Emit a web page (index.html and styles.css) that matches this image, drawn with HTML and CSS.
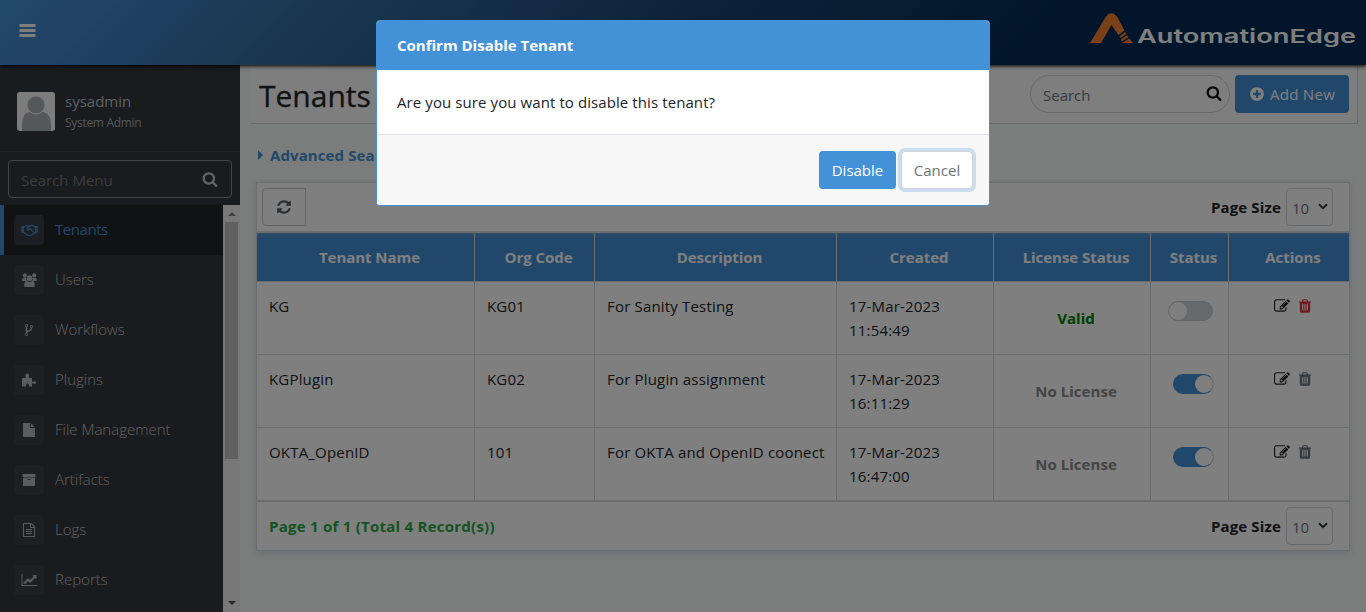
FILE: index.html
```html
<!DOCTYPE html>
<html lang="en">
<head>
<meta charset="utf-8">
<title>Tenants</title>
<link rel="stylesheet" href="styles.css">
</head>
<body>
<svg class="defs" width="0" height="0">
  <symbol id="search" viewBox="0 0 1792 1792"><path d="M1216 832q0-185-131.500-316.500t-316.500-131.500-316.500 131.500-131.500 316.500 131.500 316.500 316.500 131.500 316.500-131.500 131.500-316.500zm512 832q0 52-38 90t-90 38q-54 0-90-38l-343-342q-179 124-399 124-143 0-273.500-55.500t-225-150-150-225-55.500-273.500 55.500-273.500 150-225 225-150 273.500-55.500 273.500 55.500 225 150 150 225 55.500 273.500q0 220-124 399l343 343q37 37 37 90z"/></symbol>
  <symbol id="refresh" viewBox="0 0 1792 1792"><path d="M1639 1056q0 5-1 7-64 268-268 434.500t-478 166.500q-146 0-282.500-55t-243.500-157l-129 129q-19 19-45 19t-45-19-19-45v-448q0-26 19-45t45-19h448q26 0 45 19t19 45-19 45l-137 137q71 66 161 102t187 36q134 0 250-65t186-179q11-17 53-117 8-23 30-23h192q13 0 22.500 9.500t9.500 22.500zm25-800v448q0 26-19 45t-45 19h-448q-26 0-45-19t-19-45 19-45l138-138q-148-137-349-137-134 0-250 65t-186 179q-11 17-53 117-8 23-30 23h-199q-13 0-22.500-9.500t-9.500-22.500v-7q65-268 270-434.500t480-166.500q146 0 284 55.500t245 156.500l130-129q19-19 45-19t45 19 19 45z"/></symbol>
  <symbol id="plus" viewBox="0 0 1792 1792"><path d="M1344 960v-128q0-26-19-45t-45-19h-256v-256q0-26-19-45t-45-19h-128q-26 0-45 19t-19 45v256h-256q-26 0-45 19t-19 45v128q0 26 19 45t45 19h256v256q0 26 19 45t45 19h128q26 0 45-19t19-45v-256h256q26 0 45-19t19-45zm320-64q0 209-103 385.500t-279.500 279.500-385.500 103-385.500-103-279.500-279.500-103-385.500 103-385.500 279.500-279.500 385.500-103 385.500 103 279.500 279.500 103 385.500z"/></symbol>
  <symbol id="trash" viewBox="0 0 1792 1792"><path d="M704 1376v-704q0-14-9-23t-23-9h-64q-14 0-23 9t-9 23v704q0 14 9 23t23 9h64q14 0 23-9t9-23zm256 0v-704q0-14-9-23t-23-9h-64q-14 0-23 9t-9 23v704q0 14 9 23t23 9h64q14 0 23-9t9-23zm256 0v-704q0-14-9-23t-23-9h-64q-14 0-23 9t-9 23v704q0 14 9 23t23 9h64q14 0 23-9t9-23zm-544-992h448l-48-117q-7-9-17-11h-317q-10 2-17 11zm928 32v64q0 14-9 23t-23 9h-96v948q0 83-47 143.500t-113 60.500h-832q-66 0-113-58.500t-47-141.500v-952h-96q-14 0-23-9t-9-23v-64q0-14 9-23t23-9h309l70-167q15-37 54-63t79-26h320q40 0 79 26t54 63l70 167h309q14 0 23 9t9 23z"/></symbol>
  <symbol id="edit" viewBox="0 0 1792 1792"><path d="M888 1184l116-116-152-152-116 116v56h96v96h56zm440-720q-16-16-33 1l-350 350q-17 17-1 33t33-1l350-350q17-17 1-33zm80 594v190q0 119-84.500 203.500t-203.500 84.500h-832q-119 0-203.500-84.500t-84.500-203.500v-832q0-119 84.500-203.500t203.500-84.500h832q63 0 117 25 15 7 18 23 3 17-9 29l-49 49q-14 14-32 8-23-6-45-6h-832q-66 0-113 47t-47 113v832q0 66 47 113t113 47h832q66 0 113-47t47-113v-126q0-13 9-22l64-64q15-15 35-7t20 29zm-96-738l288 288-672 672h-288v-288zm444 132l-92 92-288-288 92-92q28-28 68-28t68 28l152 152q28 28 28 68t-28 68z"/></symbol>
</svg>

<header class="topbar">
  <svg class="burger" viewBox="0 0 17 13"><path d="M.5 0h16v3H.5zM.5 5h16v3H.5zM.5 10h16v3H.5z"/></svg>
  <svg class="logo" viewBox="0 0 270 40">
    <path class="mark" d="M1 31 17 4.500Q22-2 28 4.500L35.500 18.500 29.500 23 22.500 13 12 31ZM30.500 24.200 36.300 20 37.500 22 31.300 26ZM32 27.300 38.300 23.300 39.500 25.200 32.800 29.500ZM33 31 40.300 26.500 44 31Z"/>
    <text x="48" y="30.500" textLength="219" lengthAdjust="spacingAndGlyphs">AutomationEdge</text>
  </svg>
</header>

<div class="layout">
  <aside class="sidebar">
    <div class="user">
      <svg class="avatar" viewBox="0 0 38 39"><rect width="38" height="39" rx="3"/><path d="M5 39v-5q0-14 8-14 6 4 12 0 9 0 9 14v5z"/><circle cx="19" cy="13" r="9"/></svg>
      <div><div class="name">sysadmin</div><div class="role">System Admin</div></div>
    </div>
    <div class="menu-search"><span>Search Menu</span><svg class="ic"><use href="#search"/></svg></div>
    <div class="menu-wrap">
      <nav class="menu">
        <div class="item active"><i><svg class="wide" viewBox="0 0 18 13"><path class="line" d="M1 3h1.500v6H1zM15.500 3H17v6h-1.500zM2.500 3.200 5.500 2l3 .5L11 1.500l4.500 1.700M2.500 9l4.500 3q2 .8 4 0l4.500-3M8.500 2.500 6.500 5q.5 1.800 2.300.8L10 5l3.500 4"/></svg></i><span>Tenants</span></div>
        <div class="item"><i><svg class="wide" viewBox="0 0 18 15"><circle cx="4" cy="2.500" r="2.200"/><circle cx="14" cy="2.500" r="2.200"/><path d="M1 8q0-3 2-3h2q0 2 1.500 3.500H1zM17 8q0-3-2-3h-2q0 2-1.500 3.500H17zM3.500 15v-3q0-3.500 2.500-3.500 3 2 6 0 2.500 0 2.500 3.500v3z"/><circle cx="9" cy="5.500" r="3.200"/></svg></i><span>Users</span></div>
        <div class="item"><i><svg viewBox="0 0 1792 1792"><path d="M672 1472q0-40-28-68t-68-28-68 28-28 68 28 68 68 28 68-28 28-68zm0-1152q0-40-28-68t-68-28-68 28-28 68 28 68 68 28 68-28 28-68zm640 128q0-40-28-68t-68-28-68 28-28 68 28 68 68 28 68-28 28-68zm96 0q0 52-26 96.500t-70 69.500q-2 287-226 414-67 38-203 81-128 40-169.500 71t-41.500 100v26q44 25 70 69.500t26 96.500q0 80-56 136t-136 56-136-56-56-136q0-52 26-96.500t70-69.500v-820q-44-25-70-69.500t-26-96.500q0-80 56-136t136-56 136 56 56 136q0 52-26 96.500t-70 69.500v497q54-26 154-57 55-17 87.500-29.500t70.500-31 59-39.500 40.500-51 28-69.500 8.500-91.500q-44-25-70-69.500t-26-96.500q0-80 56-136t136-56 136 56 56 136z"/></svg></i><span>Workflows</span></div>
        <div class="item"><i><svg viewBox="0 0 14 14"><path d="M0 5h4Q3 3.500 3.500 2q.3-1.500 1.700-1.500T7 2Q7.500 3.500 6.500 5H10v3.500q1 .6 2-.1t1.700.3q.5 1.200-.2 1.900-.8.600-2-.1-.8-.3-1.500.1v2.900H7q0-3-1.500-3T4 13.500H0z"/></svg></i><span>Plugins</span></div>
        <div class="item"><i><svg viewBox="0 0 1792 1792"><path d="M1152 512v-472q22 14 36 28l408 408q14 14 28 36h-472zm-128 32q0 40 28 68t68 28h544v1056q0 40-28 68t-68 28h-1344q-40 0-68-28t-28-68v-1600q0-40 28-68t68-28h800v544z"/></svg></i><span>File Management</span></div>
        <div class="item"><i><svg viewBox="0 0 1792 1792"><path d="M1088 832q0-26-19-45t-45-19h-256q-26 0-45 19t-19 45 19 45 45 19h256q26 0 45-19t19-45zm576-192v960q0 26-19 45t-45 19h-1408q-26 0-45-19t-19-45v-960q0-26 19-45t45-19h1408q26 0 45 19t19 45zm64-448v256q0 26-19 45t-45 19h-1536q-26 0-45-19t-19-45v-256q0-26 19-45t45-19h1536q26 0 45 19t19 45z"/></svg></i><span>Artifacts</span></div>
        <div class="item"><i><svg viewBox="0 0 1792 1792"><path d="M1596 380q28 28 48 76t20 88v1152q0 40-28 68t-68 28h-1344q-40 0-68-28t-28-68v-1600q0-40 28-68t68-28h896q40 0 88 20t76 48zm-444-244v376h376q-10-29-22-41l-313-313q-12-12-41-22zm384 1528v-1024h-416q-40 0-68-28t-28-68v-416h-768v1536h1280zm-1024-864q0-14 9-23t23-9h704q14 0 23 9t9 23v64q0 14-9 23t-23 9h-704q-14 0-23-9t-9-23v-64zm736 224q14 0 23 9t9 23v64q0 14-9 23t-23 9h-704q-14 0-23-9t-9-23v-64q0-14 9-23t23-9h704zm0 256q14 0 23 9t9 23v64q0 14-9 23t-23 9h-704q-14 0-23-9t-9-23v-64q0-14 9-23t23-9h704z"/></svg></i><span>Logs</span></div>
        <div class="item"><i><svg class="wide" viewBox="0 0 2048 1792"><path d="M2048 1536v128h-2048v-1536h128v1408h1920zm-128-1248v435q0 21-19.500 29.500t-35.500-7.500l-121-121-633 633q-10 10-23 10t-23-10l-233-233-416 416-192-192 585-585q10-10 23-10t23 10l233 233 464-464-121-121q-16-16-7.500-35.500t29.500-19.500h435q14 0 23 9t9 23z"/></svg></i><span>Reports</span></div>
      </nav>
      <div class="scrollbar"><b class="up"></b><div class="thumb"></div><b class="down"></b></div>
    </div>
  </aside>

  <main class="content">
    <div class="titlebar">
      <h1>Tenants</h1>
      <div class="find"><span>Search</span><svg class="ic"><use href="#search"/></svg></div>
      <button class="add"><svg class="ic"><use href="#plus"/></svg><span>Add New</span></button>
    </div>
    <div class="advanced"><b class="caret"></b>Advanced Search</div>
    <section class="card">
      <div class="bar tools">
        <button class="reload"><svg class="ic"><use href="#refresh"/></svg></button>
        <label>Page Size</label><div class="select">10<svg viewBox="0 0 10 7"><path d="M1 1.200 5 5.200 9 1.200"/></svg></div>
      </div>
      <div class="grid">
        <div class="th">Tenant Name</div><div class="th">Org Code</div><div class="th">Description</div><div class="th">Created</div><div class="th">License Status</div><div class="th">Status</div><div class="th">Actions</div>

        <div>KG</div><div>KG01</div><div>For Sanity Testing</div><div>17-Mar-2023<br>11:54:49</div><div class="lic valid">Valid</div><div class="sw"><span class="toggle"></span></div><div class="act"><svg class="ic"><use href="#edit"/></svg><svg class="ic red"><use href="#trash"/></svg></div>

        <div>KGPlugin</div><div>KG02</div><div>For Plugin assignment</div><div>17-Mar-2023<br>16:11:29</div><div class="lic">No License</div><div class="sw"><span class="toggle on"></span></div><div class="act"><svg class="ic"><use href="#edit"/></svg><svg class="ic grey"><use href="#trash"/></svg></div>

        <div>OKTA_OpenID</div><div>101</div><div>For OKTA and OpenID coonect</div><div>17-Mar-2023<br>16:47:00</div><div class="lic">No License</div><div class="sw"><span class="toggle on"></span></div><div class="act"><svg class="ic"><use href="#edit"/></svg><svg class="ic grey"><use href="#trash"/></svg></div>
      </div>
      <div class="bar foot">
        <span class="pages">Page 1 of 1 (Total 4 Record(s))</span>
        <label>Page Size</label><div class="select">10<svg viewBox="0 0 10 7"><path d="M1 1.200 5 5.200 9 1.200"/></svg></div>
      </div>
    </section>
  </main>
</div>

<div class="backdrop">
  <div class="modal">
    <div class="modal-head">Confirm Disable Tenant</div>
    <div class="modal-body">Are you sure you want to disable this tenant?</div>
    <div class="modal-foot"><button class="primary">Disable</button><button class="cancel">Cancel</button></div>
  </div>
</div>
</body>
</html>
```

FILE: styles.css
```css
* { box-sizing: border-box; }
body { margin: 0; height: 612px; overflow: hidden; background: #f6faf8; color: #212529; font: 15px/24px "Open Sans", "Noto Sans", sans-serif; display: flex; flex-direction: column; }
button { font: inherit; border: 0; padding: 0; white-space: nowrap; }
svg { display: block; fill: currentColor; flex: none; }
.defs { position: absolute; }
.ic { width: 16px; height: 16px; }

.topbar { flex: none; height: 65px; display: flex; justify-content: space-between; padding: 0 9px 0 19px; background: linear-gradient(135deg, #4692d6 0%, #3d7dc0 12%, #34709f 22%, #2d6396 30%, #1c4774 48%, #042b55 75%, #042b55 100%); box-shadow: 0 1px 4px #000; z-index: 2; color: #fff; }
.burger { width: 17px; height: 13px; margin-top: 24px; }
.logo { width: 270px; height: 40px; margin: 12px -2px 0 0; overflow: visible; }
.mark { fill: #f58233; }
.logo text { font: 600 19px "Inter", sans-serif; }

.layout { flex: 1; min-height: 0; display: flex; }
.sidebar { width: 240px; flex: none; background: #34363c; display: flex; flex-direction: column; }
.user { height: 87px; display: flex; gap: 10px; padding: 27px 17px 0; border-bottom: 1px solid #43454b; }
.avatar { width: 38px; height: 39px; fill: #aab0b7; }
.avatar rect { fill: #f8f8f8; }
.avatar circle { stroke: #f8f8f8; }
.name { line-height: 18px; color: #b8c0c8; }
.role { font-size: 12px; line-height: 26px; letter-spacing: -.3px; color: #aab0b8; }
.menu-search { height: 38px; margin: 8px 8px 7px; border: 1px solid #8b8c90; border-radius: 4px; display: flex; align-items: center; justify-content: space-between; padding: 2px 13px 0 12px; color: #777a80; }
.menu-search .ic { color: #c6c6c6; margin-top: -3px; }
.menu-wrap { flex: 1; min-height: 0; display: flex; overflow: hidden; }
.menu { width: 223px; flex: none; }
.item { height: 50px; display: flex; align-items: center; gap: 11px; padding-left: 14px; color: #c4c4c4; font-weight: 300; }
.item span { padding-bottom: 2px; }
.item i { width: 30px; height: 30px; border-radius: 4px; background: #3c3e45; display: grid; place-items: center; color: #b5b8bb; }
.item i svg { width: 14px; height: 14px; }
.item i svg.wide { width: 17px; }
.item.active { background: #222426; color: #4391d6; border-left: 4px solid #4391d6; padding-left: 10px; letter-spacing: -.45px; font-weight: 400; }
.item.active i { color: #4391d6; background: #3a3c46; }
.line { fill: none; stroke: currentColor; stroke-width: 1.3; stroke-linejoin: round; }
.scrollbar { width: 17px; background: #f1f1f1; display: flex; flex-direction: column; align-items: center; }
.up, .down { border: 4px solid transparent; }
.up { border-width: 0 4px 4px; border-bottom-color: #8a8a8a; margin: 7px 0 6px; }
.thumb { width: 13px; height: 237px; background: #c1c1c1; }
.down { border-width: 4px 4px 0; border-top-color: #505050; margin-top: auto; margin-bottom: 7px; }

.content { flex: 1; padding: 0 8px 0 11px; }
.titlebar { height: 59px; display: flex; align-items: flex-start; padding: 10px 8px 0 8px; background: #fdfdfd; border: solid #d0d3d5; border-width: 0 1px 1px 0; }
h1 { margin: 0 auto 0 0; font: 400 30px/42px "Open Sans", sans-serif; -webkit-text-stroke: .3px; }
.find { width: 200px; height: 38px; border: 1px solid #ced4da; border-radius: 19px; display: flex; align-items: center; justify-content: space-between; padding: 1px 7px 0 12px; color: #6c757d; }
.find .ic { color: #111; margin-top: -3px; }
.add { width: 114px; height: 38px; margin-left: 5px; border-radius: 4px; background: #4391d6; color: #fff; display: flex; align-items: center; justify-content: center; gap: 5px; letter-spacing: .3px; }
.advanced { height: 58px; padding: 19px 0 0 7px; display: flex; gap: 7px; color: #4391d6; font-weight: 700; letter-spacing: .1px; }
.caret { border: solid transparent; border-width: 5px 0 5px 5px; border-left-color: #4391d6; height: 10px; margin-top: 7px; }

.card { width: 1094px; margin-left: 5px; border: 1px solid #d5d9dd; background: #fff; box-shadow: 0 2px 7px #d6dde2; }
.bar { display: flex; align-items: center; justify-content: flex-end; padding: 0 16px 0 5px; }
.reload { width: 44px; height: 38px; margin-right: auto; border: 1px solid #c4c8cc; border-radius: 4px 0 0 4px; background: #fff; display: grid; place-items: center; color: #555c63; }
label { font-weight: 700; margin-right: 5px; letter-spacing: .15px; color: #212529; }
.select { width: 47px; height: 38px; border: 1px solid #ced4da; border-radius: 4px; padding: 1px 4px 0 5px; display: flex; align-items: center; justify-content: space-between; color: #6c757d; }
.select svg { width: 10px; height: 7px; margin-top: -3px; fill: none; stroke: #343a40; stroke-width: 2; }
.grid { display: grid; grid-template-columns: 218px 120px 242px 157px 157px 78px 120px; grid-template-rows: 49px 73px 73px 73px; }
.tools { height: 50px; border-bottom: 2px solid #d8dadc; }
.grid > div { padding: 12px 0 0 12px; border-right: 1px solid #d5d9dd; border-bottom: 1px solid #d5d9dd; white-space: nowrap; letter-spacing: .18px; }
.grid > div:nth-child(7n) { border-right: 0; }
.grid > .th { padding: 12px 0 0 8px; background: #4391d6; color: #fff; font-weight: 700; text-align: center; letter-spacing: -.05px; box-shadow: inset 0 4px 4px -3px #6f9fc9; }
.grid > .lic { font-weight: 700; text-align: center; padding: 24px 0 0 8px; letter-spacing: .05px; color: #888; }
.grid > .valid { color: green; }
.grid > .sw { padding: 19px 14px 0 17px; }
.toggle { display: block; width: 45px; height: 20px; border-radius: 10px; background: #cdd4d9; border: 1px solid #c4cacf; }
.toggle::before { content: ""; display: block; width: 18px; height: 18px; border-radius: 50%; background: #fff; }
.toggle.on { width: 41px; margin-left: 5px; background: #4391d6; border-color: #4391d6; border-right-color: #ddd; }
.toggle.on::before { margin-left: auto; }
.grid > .act { display: flex; gap: 7px; padding: 16px 0 0 45px; }
.act .ic { color: #222; }
.act .red { color: #dc3545; }
.act .grey { color: #6c757d; }
.foot { height: 49px; border-top: 1px solid #d5d9dd; }
.pages { margin: 0 auto 0 7px; color: #28a745; font-weight: 700; letter-spacing: .25px; }

.backdrop { position: absolute; inset: 0; z-index: 5; background: rgba(0, 0, 0, .5); display: flex; align-items: flex-start; padding: 20px 0 0 376px; }
.modal { width: 614px; height: 186px; border: 1px solid #4391d6; border-radius: 4px; background: #fff; overflow: hidden; display: flex; flex-direction: column; }
.modal-head { height: 49px; padding: 12px 20px; background: #4391d6; color: #fff; font-weight: 700; }
.modal-body { height: 64px; padding: 20px; letter-spacing: .09px; }
.modal-foot { flex: 1; background: #f7f7f7; border-top: 1px solid #dee2e6; display: flex; gap: 5px; justify-content: flex-end; padding: 16px 16px; }
.modal-foot button { height: 38px; border-radius: 4px; }
.primary { width: 77px; background: #4391d6; color: #fff; }
.cancel { width: 72px; background: #fff; border: 1px solid #ced4da !important; color: #6c757d; box-shadow: 0 0 0 3px #c9ddef; }
```
